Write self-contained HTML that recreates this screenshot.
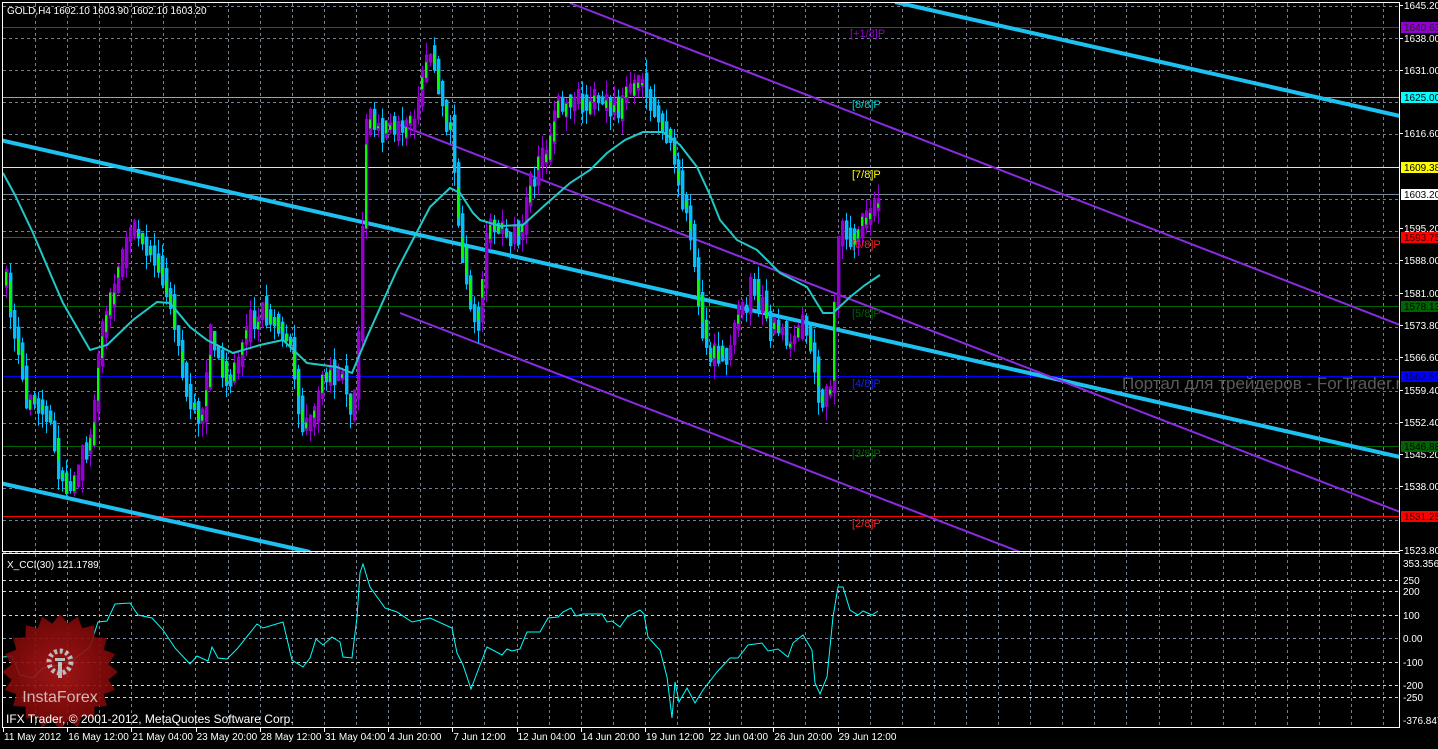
<!DOCTYPE html>
<html><head><meta charset="utf-8"><style>
html,body{margin:0;padding:0;background:#000;}
body{width:1438px;height:744px;overflow:hidden;font-family:"Liberation Sans",sans-serif;}
svg text{font-family:"Liberation Sans",sans-serif;}
</style></head><body>
<svg id="s" width="1438" height="744" xmlns="http://www.w3.org/2000/svg">
<rect width="1438" height="744" fill="#000"/>
<defs>
<clipPath id="cm"><rect x="3" y="3" width="1397" height="549"/></clipPath>
<clipPath id="cc"><rect x="3" y="554" width="1397" height="173"/></clipPath>
<radialGradient id="rg"><stop offset="0" stop-color="#b01818"/><stop offset="1" stop-color="#7a0808"/></radialGradient>
</defs>
<g id="grid"></g>
<g clip-path="url(#cm)">
<line x1="3" x2="1400" y1="27.5" y2="27.5" stroke="#9400d3"/>
<line x1="3" x2="1400" y1="97.5" y2="97.5" stroke="#00e5ee"/>
<line x1="3" x2="1400" y1="167.5" y2="167.5" stroke="#ffff00"/>
<line x1="3" x2="1400" y1="194.5" y2="194.5" stroke="#778899"/>
<line x1="3" x2="1400" y1="237.5" y2="237.5" stroke="#ff0000"/>
<line x1="3" x2="1400" y1="306.5" y2="306.5" stroke="#006400"/>
<line x1="3" x2="1400" y1="376.5" y2="376.5" stroke="#0000ff"/>
<line x1="3" x2="1400" y1="446.5" y2="446.5" stroke="#006400"/>
<line x1="3" x2="1400" y1="516.5" y2="516.5" stroke="#ff0000"/>
<text x="1122" y="389" font-size="17" fill="#5a5a5a">Портал для трейдеров - ForTrader.ru</text>
<line x1="0" y1="140" x2="1400" y2="457" stroke="#1ec0f0" stroke-width="4"/>
<line x1="0" y1="483" x2="310" y2="552" stroke="#1ec0f0" stroke-width="4"/>
<line x1="895" y1="2" x2="1400" y2="116" stroke="#1ec0f0" stroke-width="4"/>
<line x1="570" y1="3" x2="1400" y2="325" stroke="#8a2be2" stroke-width="2"/>
<line x1="400" y1="125" x2="1400" y2="512" stroke="#8a2be2" stroke-width="2"/>
<line x1="400" y1="313" x2="1020" y2="552" stroke="#8a2be2" stroke-width="2"/>
<g id="bars"></g>
<polyline fill="none" stroke="#20c8c8" stroke-width="2" points="3,173 15,195 33,233 53,280 63,303 90,350 107,345 133,320 157,302 170,303 190,327 207,340 233,353 260,345 283,340 307,363 337,367 352,373 367,337 397,270 430,207 450,188 460,193 473,213 480,220 500,226 523,225 545,205 570,183 590,170 607,153 625,140 643,132 663,132 680,145 697,167 710,195 720,220 737,240 757,250 780,273 807,287 823,313 833,313 850,297 865,285 880,275"/>
<g font-size="11">
<text x="850" y="37" fill="#9400d3">[+1/8]P</text>
<text x="852" y="108" fill="#00d0d0">[8/8]P</text>
<text x="852" y="178" fill="#ffff00">[7/8]P</text>
<text x="852" y="248" fill="#ff2020">[6/8]P</text>
<text x="852" y="317" fill="#006400">[5/8]P</text>
<text x="852" y="387" fill="#1020ff">[4/8]P</text>
<text x="852" y="457" fill="#006400">[3/8]P</text>
<text x="852" y="527" fill="#ff2020">[2/8]P</text>
</g>
</g>
<text x="7" y="14" font-size="10" fill="#fff">GOLD,H4  1602.10 1603.90 1602.10 1603.20</text>
<g clip-path="url(#cc)">
<g stroke-dasharray="3,3" stroke-width="1">
<line x1="3" x2="1400" y1="580.5" y2="580.5" stroke="#d8d8d8"/>
<line x1="3" x2="1400" y1="591.5" y2="591.5" stroke="#d8d8d8"/>
<line x1="3" x2="1400" y1="615.5" y2="615.5" stroke="#d8d8d8"/>
<line x1="3" x2="1400" y1="638.5" y2="638.5" stroke="#8090a8"/>
<line x1="3" x2="1400" y1="662.5" y2="662.5" stroke="#d8d8d8"/>
<line x1="3" x2="1400" y1="685.5" y2="685.5" stroke="#d8d8d8"/>
<line x1="3" x2="1400" y1="697.5" y2="697.5" stroke="#d8d8d8"/>
</g>
<polyline fill="none" stroke="#00ffff" stroke-width="1" points="3,657 12,656 20,675 33,678 43,668 60,665 73,660 90,647 98,622 107,621 115,604 130,603 138,615 152,618 163,630 175,648 190,664 197,656 208,661 212,647 218,658 227,659 237,649 257,624 263,628 283,622 292,660 303,667 310,658 316,639 323,645 332,637 340,642 343,657 352,658 357,617 360,573 363,564 370,587 385,608 397,612 412,622 430,618 452,628 457,653 463,665 471,689 480,665 487,647 502,655 507,649 512,651 520,649 527,632 540,632 548,618 558,617 563,612 571,608 576,616 583,614 602,614 607,622 612,621 620,627 627,617 640,610 644,614 648,637 657,647 660,650 667,677 672,718 675,682 679,702 687,688 695,703 703,690 717,672 730,658 738,658 748,645 762,643 768,651 778,649 788,657 793,643 803,635 812,650 815,683 820,694 827,677 833,617 838,587 843,587 850,610 858,615 863,611 872,615 878,611"/>
<g transform="translate(60,672)" opacity="0.9">
<polygon id="star" fill="url(#rg)" points=""/>
<g fill="#d0d0d0">
<circle cx="0" cy="-10" r="11" fill="none" stroke="#d0d0d0" stroke-width="5" stroke-dasharray="3,2.7"/>
<circle cx="0" cy="-10" r="6" fill="#9a1010"/>
<rect x="-2" y="-10" width="4" height="16"/>
<rect x="-5" y="-14" width="10" height="3"/>
</g>
<text x="0" y="30" text-anchor="middle" font-size="16" fill="#e8c8c8">InstaForex</text>
</g>
</g>
<text x="7" y="568" font-size="10" fill="#fff">X_CCI(30) 121.1789</text>
<text x="6" y="723" font-size="12" fill="#fff">IFX Trader, © 2001-2012, MetaQuotes Software Corp.</text>
<rect x="2.5" y="2.5" width="1397" height="549" fill="none" stroke="#fff"/>
<rect x="2.5" y="553.5" width="1397" height="174" fill="none" stroke="#fff"/>
<g font-size="10" fill="#fff" id="ax"></g>
<g font-size="10" fill="#fff" id="tx"></g>
</svg>
<script>
(function(){
var NS="http://www.w3.org/2000/svg";
function el(p,n,a,t){var e=document.createElementNS(NS,n);for(var k in a)e.setAttribute(k,a[k]);if(t!=null)e.textContent=t;p.appendChild(e);return e;}
var g=document.getElementById('grid');
for(var x=35;x<1400;x+=32.1){var xx=Math.round(x)+.5;
 el(g,'line',{x1:xx,x2:xx,y1:3,y2:552,stroke:'#708090','stroke-dasharray':'3,3'});
 el(g,'line',{x1:xx,x2:xx,y1:554,y2:727,stroke:'#708090','stroke-dasharray':'3,3'});}
for(var y=6;y<552;y+=32.1){var yy=Math.round(y)+.5;el(g,'line',{x1:3,x2:1400,y1:yy,y2:yy,stroke:'#708090','stroke-dasharray':'3,3'});}
var pts=[];for(var i=0;i<40;i++){var r=i%2?49:58,a=i*Math.PI/20;pts.push((r*Math.cos(a)).toFixed(1)+','+(r*Math.sin(a)).toFixed(1));}
document.getElementById('star').setAttribute('points',pts.join(' '));
var ax=document.getElementById('ax');
var L=[["1645.20",5],["1638.00",38],["1631.00",70],["1616.60",133],["1595.20",228],["1588.00",260],["1581.00",293],["1573.80",325],["1566.60",357],["1559.40",390],["1552.40",422],["1545.20",454],["1538.00",486],["1523.80",550]];
L.forEach(function(l){el(ax,'line',{x1:1400,x2:1403,y1:l[1]+.5,y2:l[1]+.5,stroke:'#fff'});el(ax,'text',{x:1404,y:l[1]+4},l[0]);});
var B=[["1640.63",27,"#9400d3","#222"],["1625.00",97,"#00ffff","#000"],["1609.38",167,"#ffff00","#000"],["1603.20",194,"#ffffff","#000"],["1593.75",237,"#ff0000","#300"],["1578.13",306,"#006400","#000"],["1562.50",376,"#0000ff","#002"],["1546.88",446,"#006400","#000"],["1531.25",516,"#ff0000","#300"]];
B.forEach(function(b){el(ax,'rect',{x:1401,y:b[1]-5,width:37,height:11,fill:b[2]});el(ax,'text',{x:1404,y:b[1]+4,fill:b[3]},b[0]);});
var C=[["353.356",563],["250",580],["200",591],["100",615],["0.00",638],["-100",662],["-200",685],["-250",697],["-376.847",720]];
C.forEach(function(c){el(ax,'text',{x:1403,y:c[1]+4},c[0]);});
var tx=document.getElementById('tx');
var T=["11 May 2012","16 May 12:00","21 May 04:00","23 May 20:00","28 May 12:00","31 May 04:00","4 Jun 20:00","7 Jun 12:00","12 Jun 04:00","14 Jun 20:00","19 Jun 12:00","22 Jun 04:00","26 Jun 20:00","29 Jun 12:00"];
T.forEach(function(t,i){var x=3+i*64.2;el(tx,'line',{x1:Math.round(x)+.5,x2:Math.round(x)+.5,y1:728,y2:732,stroke:'#fff'});el(tx,'text',{x:x+1,y:740},t);});
var K=[[5,285],[15,340],[25,395],[40,405],[50,430],[60,480],[70,490],[80,460],[90,430],[100,330],[110,300],[120,260],[130,230],[140,245],[150,250],[160,270],[170,300],[180,370],[190,400],[200,420],[210,330],[220,370],[230,380],[240,340],[250,320],[260,310],[270,320],[280,330],[290,350],[300,420],[310,420],[320,380],[330,375],[340,375],[350,410],[355,380],[362,200],[366,110],[375,125],[385,130],[395,130],[405,125],[415,110],[425,60],[432,60],[440,110],[450,130],[458,240],[463,260],[470,320],[478,320],[485,240],[490,220],[500,230],[510,235],[520,230],[527,190],[535,170],[545,150],[555,110],[565,110],[575,100],[585,105],[595,100],[605,95],[615,110],[625,95],[640,80],[650,110],[660,120],[670,140],[680,200],[690,230],[700,330],[710,360],[720,360],[730,340],[740,310],[750,290],[760,300],[770,330],[780,330],[790,350],[800,320],[810,350],[815,380],[820,410],[830,380],[835,260],[840,230],[850,245],[860,225],[870,215],[878,200]];
function interp(x){for(var i=0;i<K.length-1;i++){if(x>=K[i][0]&&x<=K[i+1][0]){var t=(x-K[i][0])/(K[i+1][0]-K[i][0]);return K[i][1]+t*(K[i+1][1]-K[i][1]);}}return K[K.length-1][1];}
var seed=7;function rnd(){seed=(seed*16807)%2147483647;return seed/2147483647;}
var bg=document.getElementById('bars');var prev=interp(5);
for(var x=5;x<=878;x+=4){var c=interp(x)+(rnd()-.5)*14;var o=prev;prev=c;
 var bt=Math.min(o,c)-rnd()*10,bb=Math.max(o,c)+rnd()*10;if(bb-bt<8)bb=bt+8;
 var hi=bt-rnd()*14,lo=bb+rnd()*14;
 var up=c<o;var col=up?'#9400d3':'#00bfff';
 el(bg,'line',{x1:x+1.5,x2:x+1.5,y1:hi,y2:lo,stroke:col});
 el(bg,'rect',{x:x,y:bt,width:3.4,height:bb-bt,fill:col});
 if(rnd()<0.6){var gy=bt+(bb-bt)*rnd()*0.5;el(bg,'rect',{x:x,y:gy,width:2,height:(bb-gy)*(0.4+rnd()*0.6),fill:'#00ff00'});}
}
})();
</script>
</body></html>
